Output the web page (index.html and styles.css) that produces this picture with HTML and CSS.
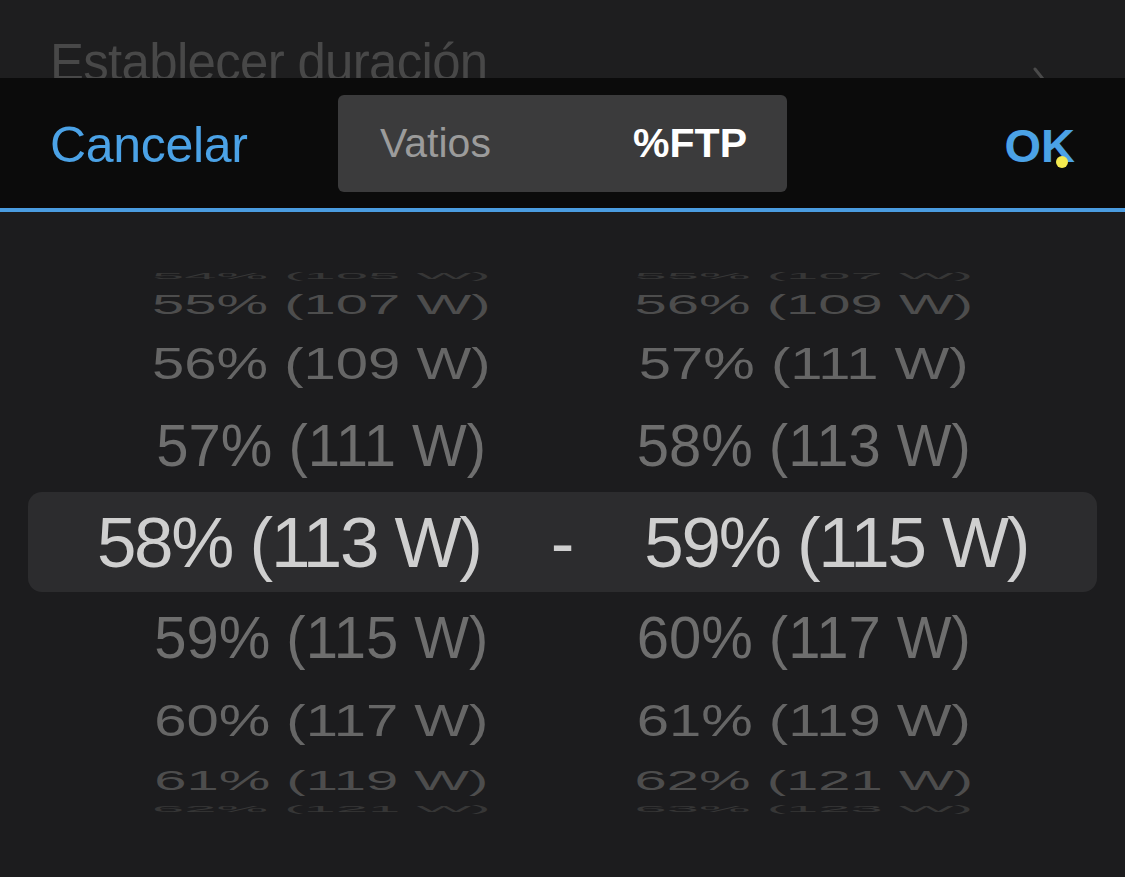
FILE: index.html
```html
<!DOCTYPE html>
<html lang="es">
<head>
    <meta charset="UTF-8">
    <meta name="viewport" content="width=device-width, initial-scale=1.0">
    <title>Establecer rango</title>
    <link rel="stylesheet" href="styles.css">
</head>
<body>
    <div class="sheet-title">
        <span>Establecer duración</span>
        <svg class="chevron" width="20" height="36" viewBox="0 0 20 36">
            <polyline points="4,3 16,18 4,33" fill="none" stroke="#4a4a4a" stroke-width="3" stroke-linecap="round"/>
        </svg>
    </div>

    <div class="toolbar">
        <a class="tb-btn cancel" href="#">Cancelar</a>
        <div class="segmented">
            <span class="seg">Vatios</span>
            <span class="seg active">%FTP</span>
        </div>
        <a class="tb-btn ok" href="#">OK</a>
        <span class="touch"></span>
    </div>

    <div class="picker">
        <div class="column">
            <div class="row r4"><span>54% (105 W)</span></div>
            <div class="row r3"><span>55% (107 W)</span></div>
            <div class="row r2"><span>56% (109 W)</span></div>
            <div class="row r1"><span>57% (111 W)</span></div>
            <div class="row mid"><span>58% (113 W)</span></div>
            <div class="row r1"><span>59% (115 W)</span></div>
            <div class="row r2"><span>60% (117 W)</span></div>
            <div class="row r3"><span>61% (119 W)</span></div>
            <div class="row r4"><span>62% (121 W)</span></div>
        </div>
        <div class="column">
            <div class="row r4"><span>55% (107 W)</span></div>
            <div class="row r3"><span>56% (109 W)</span></div>
            <div class="row r2"><span>57% (111 W)</span></div>
            <div class="row r1"><span>58% (113 W)</span></div>
            <div class="row mid"><span>59% (115 W)</span></div>
            <div class="row r1"><span>60% (117 W)</span></div>
            <div class="row r2"><span>61% (119 W)</span></div>
            <div class="row r3"><span>62% (121 W)</span></div>
            <div class="row r4"><span>63% (123 W)</span></div>
        </div>

        <div class="selection">
            <span>58% (113 W)</span>
            <span class="dash">-</span>
            <span>59% (115 W)</span>
        </div>
    </div>
</body>
</html>
```

FILE: styles.css
```css
html, body {
    margin: 0;
    background: #1c1c1e;
    font-family: 'Liberation Sans', Arial, sans-serif;
}

/* sheet title peeking out behind the toolbar */
.sheet-title {
    height: 78px;
    overflow: hidden;
    box-sizing: border-box;
    padding: 37px 50px 0;
    background: #1e1e1f;
    display: flex;
    justify-content: space-between;
    align-items: flex-start;
}
.sheet-title span {
    font-size: 51px;
    line-height: 51px;
    color: #484848;
    letter-spacing: -0.7px;
}
.chevron {
    margin-top: 29px;
    margin-right: 24px;
}

.toolbar {
    position: relative;
    height: 130px;
    background: #0b0b0b;
    border-bottom: 4px solid #4a9ce0;
    display: grid;
    grid-template-columns: 1fr auto 1fr;
    align-items: center;
    padding: 0 50px;
}
.tb-btn {
    color: #4ba2e6;
    text-decoration: none;
    padding-top: 4px;
}
.cancel {
    font-size: 50px;
    justify-self: start;
    letter-spacing: -0.3px;
}
.ok {
    font-size: 47px;
    font-weight: bold;
    justify-self: end;
}
.touch {
    position: absolute;
    left: 1056px;
    top: 78px;
    width: 12px;
    height: 12px;
    border-radius: 50%;
    background: #f3ea50;
}

.segmented {
    width: 449px;
    height: 97px;
    box-sizing: border-box;
    background: #3b3b3c;
    border-radius: 6px;
    display: flex;
    align-items: center;
    padding: 0 40px 0 42px;
    justify-content: space-between;
}
.seg {
    font-size: 41px;
    color: #9b9b9b;
}
.seg.active {
    color: #fff;
    font-weight: bold;
}

/* wheel picker */
.picker {
    position: relative;
    display: flex;
    padding: 59px 80px 0;
    height: 665px;
    box-sizing: border-box;
    overflow: hidden;
}
.column {
    flex: 1;
    display: flex;
    flex-direction: column;
}
.row {
    display: flex;
    align-items: center;
    justify-content: center;
    font-size: 58px;
    line-height: 1;
    white-space: nowrap;
}
.row span {
    display: inline-block;
}
.row.mid { height: 98px; }
.row.mid span { visibility: hidden; }
.row.r1 { height: 94px; color: #6e6e6e; }
.row.r2 { height: 71px; color: #666666; }
.row.r3 { height: 48px; color: #4d4d4d; }
.row.r4 { height: 9px; color: #363636; }
.row.r1 span { transform: scaleY(1.02); }
.row.r2 span { transform: scaleY(0.77); }
.row.r3 span { transform: scaleY(0.49); }
.row.r4 span { transform: scaleY(0.17); }

.selection {
    position: absolute;
    left: 28px;
    right: 28px;
    top: 280px;
    height: 100px;
    background: #2c2c2e;
    border-radius: 14px;
    display: flex;
    align-items: center;
    justify-content: center;
    gap: 70px;
    font-size: 71px;
    letter-spacing: -2.3px;
    color: #cfcfcf;
    white-space: nowrap;
}
.selection .dash {
    letter-spacing: 0;
}
```
